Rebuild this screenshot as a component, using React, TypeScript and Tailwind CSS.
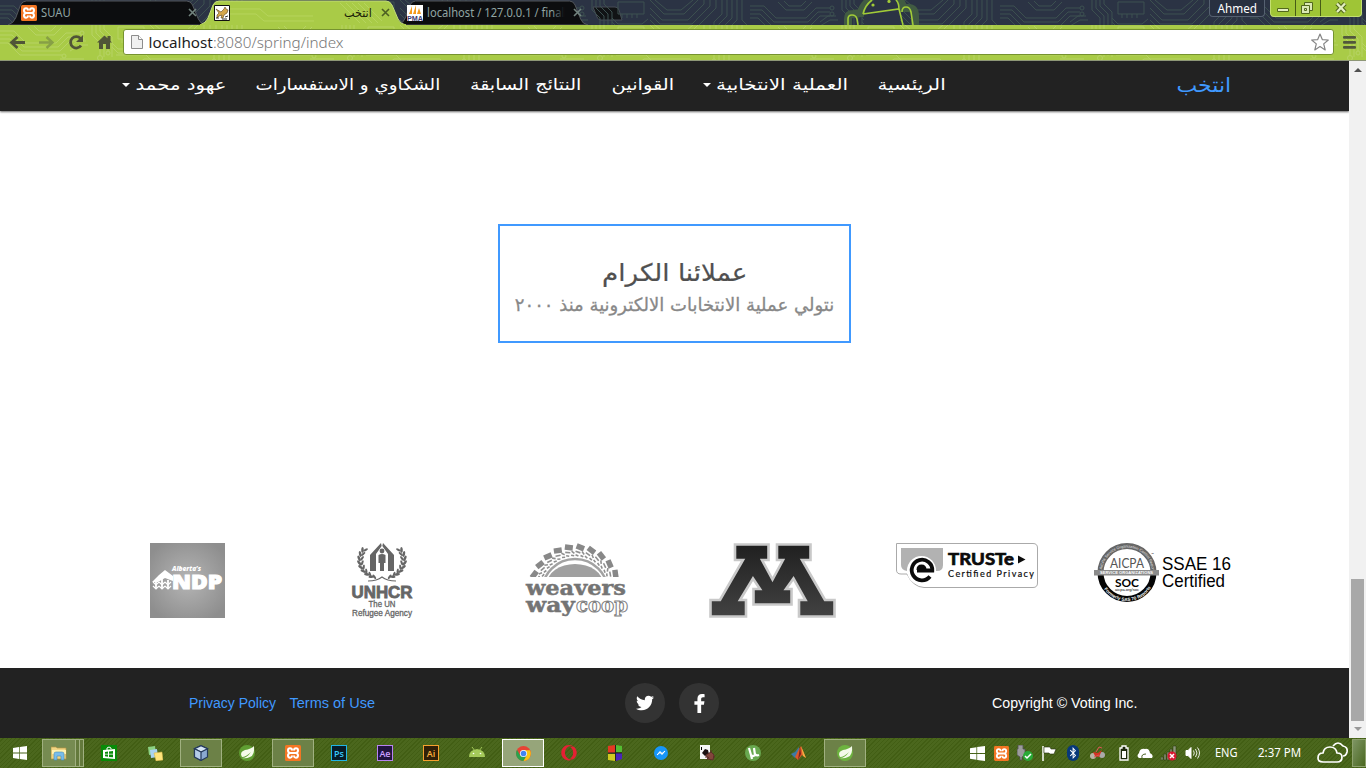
import React, { useLayoutEffect, useRef, useState } from "react";
import { FaTwitter, FaFacebookF, FaOpera, FaBluetoothB } from "react-icons/fa";

const ARABIC = "font-['DejaVu_Sans',sans-serif]";

/* Stretches a single line of text horizontally to the width of its box. */
function Fit({ className, children }: { className: string; children: React.ReactNode }) {
  const box = useRef<HTMLSpanElement>(null);
  const inner = useRef<HTMLSpanElement>(null);
  const [scale, setScale] = useState(1);
  useLayoutEffect(() => {
    if (box.current && inner.current) setScale(box.current.clientWidth / inner.current.offsetWidth);
  }, []);
  return (
    <span ref={box} className={`flex shrink-0 justify-center whitespace-nowrap ${className}`}>
      <span ref={inner} className="shrink-0" style={{ transform: `scaleX(${scale})` }}>
        {children}
      </span>
    </span>
  );
}

function Circuit({ id, stroke, className }: { id: string; stroke: string; className: string }) {
  return (
    <svg className={className} width="100%" height="100%" fill="none" stroke={stroke}>
      <defs>
        <pattern id={id} width="250" height="62" patternUnits="userSpaceOnUse">
          <path d="M0 6h14l12 12h30l10-10h14M0 10h12l12 12h34l10-10h12M0 14h10l12 12h38l10-10h10M0 18h8l12 12h42M92 0v10l8 8v12M96 0v8l8 8v16M100 0v6l8 8v12M104 0v4l8 8v20M118 2h26v12h-26zM122 14v4M127 14v4M132 14v4M137 14v4M150 0l14 14h20l14-14M155 0l12 10h14l12-10M150 8l12 12h26l16-16v-4M150 14l10 10h32l18-18v-6M150 20l8 8h38l20-20v-8M222 0v14l-8 8v12M227 0v16l-8 8v12M232 0v18l-8 8v12M237 0v20l-8 8v12M242 0v20l8 8M0 44h30l8-8h50l6 6h40l10-8h46l8 8h52M0 48h32l8-8h46l6 6h44l10-8h42l8 8h54M0 52h34l8-8h42l6 6h48l10-8h38l8 8h56M60 34h24M116 30h30l6 6" />
          <path d="M20 62v-6M40 62V54h20v8M82 62l8-8h20M152 56h24v6M192 62v-6h20v6" />
          <path d="M28 2l8 8h18l8-8M34 1l5 5h12l5-5M70 22l8-6h8M70 26l10-6h8M112 18l6 6h24l6-5M112 22l6 6h18" />
          <circle cx="82" cy="8" r="2" /><circle cx="82" cy="14" r="2" /><circle cx="100" cy="33" r="2.5" />
          <circle cx="108" cy="28" r="2" /><circle cx="214" cy="36" r="2" /><circle cx="64" cy="31" r="2" />
          <circle cx="36" cy="54" r="7" /><circle cx="36" cy="54" r="4" /><circle cx="130" cy="54" r="5" />
        </pattern>
      </defs>
      <rect width="100%" height="100%" fill={`url(#${id})`} stroke="none" />
    </svg>
  );
}

function XamppIcon({ className }: { className: string }) {
  return (
    <svg className={className} viewBox="0 0 16 16">
      <rect width="16" height="16" rx="1.5" fill="#f37623" />
      <g fill="none" stroke="#fff" strokeWidth="2">
        <path d="M7 5.5Q7 3.3 5 3.3T3 5.5Q3 7.6 5 8Q3 8.4 3 10.5T5 12.7T7 10.5M9 5.5Q9 3.3 11 3.3T13 5.5Q13 7.6 11 8Q13 8.4 13 10.5T11 12.7T9 10.5M5 8h6" />
      </g>
    </svg>
  );
}

function WindowsIcon({ className }: { className: string }) {
  return (
    <svg className={className} viewBox="0 0 14 14" fill="#fff">
      <path d="M0 2l6-.9v5.5H0zM6.7 1L14 0v6.6H6.7zM0 7.4h6v5.5L0 12zM6.7 7.4H14V14l-7.3-1z" />
    </svg>
  );
}

function Tab({ active, className, children }: { active?: boolean; className: string; children: React.ReactNode }) {
  return (
    <div className={`relative h-[25px] shrink-0 ${className}`}>
      <svg className="absolute inset-0 h-full w-full" viewBox="0 0 206 25" preserveAspectRatio="none">
        <path d="M0 25Q6 23 8 18L13 5Q15 1 19 1H186Q190 1 192 5L198 19Q200 24 206 25Z" fill={active ? "#a9cb47" : "#0c0d0f"} stroke={active ? "#c2dc79" : "#55595f"} />
        {active && <rect x="0" y="24" width="206" height="1" fill="#a9cb47" />}
        {active && <path d="M20 9h40l8 7h45M20 14h36l8 7h50M140 3l20 20M146 3l20 20M152 3l20 20M158 3l20 20M164 3l18 18" fill="none" stroke="#b6d45d" />}
      </svg>
      <div className="relative flex h-[25px] items-center">{children}</div>
    </div>
  );
}

function CloseX({ color }: { color: string }) {
  return (
    <svg className="h-[9px] w-[9px] shrink-0" viewBox="0 0 9 9" stroke={color} strokeWidth="1.6">
      <path d="M1 1l7 7M8 1l-7 7" />
    </svg>
  );
}

function TabStrip() {
  return (
    <div className="relative flex h-[25px] shrink-0 overflow-hidden bg-[#2b3344]">
      <Circuit id="strip" stroke="#3c504f" className="absolute inset-0" />
      <div className="flex pl-2">
        <Tab className="w-[198px]">
          <XamppIcon className="ml-[13px] h-4 w-4" />
          <Fit className="ml-1 w-[30px] font-['Noto_Sans',sans-serif] text-[12px] text-[#91a5a3]">SUAU</Fit>
          <span className="ml-[117px]"><CloseX color="#73847f" /></span>
        </Tab>
        <Tab active className="z-10 -ml-[6px] w-[206px]">
          <svg className="ml-[14px] h-4 w-4" viewBox="0 0 16 16">
            <path d="M.5.5h15v15H.5z" fill="#fff" stroke="#111" />
            <path d="M2 4l5 3 3-3 1-2 1 2 2 1-1 3-3 2-1 3H7l1-3-3 1-2 2v-3l2-2z" fill="#d4a64c" stroke="#59401a" strokeWidth=".6" />
            <path d="M2 13h3M11 12l3-1M8 14h5" stroke="#333" />
          </svg>
          <Fit className={`ml-[114px] w-[28px] text-[12px] text-[#1b2008] ${ARABIC}`}>انتخب</Fit>
          <span className="ml-[9px]"><CloseX color="#4c5f22" /></span>
        </Tab>
        <Tab className="-ml-[8px] w-[190px]">
          <svg className="ml-[9px] h-4 w-4 shrink-0" viewBox="0 0 16 16">
            <path d="M0 0h16v16H0z" fill="#fff" />
            <path d="M2 9L5 1v8zM6 9l3-9v9zM10 9l2-6 2 6z" fill="#f59a1b" />
            <text x="0" y="15.500" fontSize="7" fontWeight="700" fontFamily="Liberation Sans" fill="#3b3a72" textLength="16" lengthAdjust="spacingAndGlyphs">PMA</text>
          </svg>
          <div className="relative ml-1 shrink-0">
            <Fit className="w-[137px] font-['Noto_Sans',sans-serif] text-[12px] text-[#91a5a3]">localhost / 127.0.0.1 / final</Fit>
            <div className="absolute inset-y-0 right-0 w-3 bg-linear-to-r from-transparent to-[#0c0d0f]" />
          </div>
          <span className="ml-[9px]"><CloseX color="#73847f" /></span>
        </Tab>
        <svg className="mt-[6px] ml-[3px] h-[15px] w-[32px]" viewBox="0 0 32 15">
          <path d="M2 1h22q3 0 4 3l3 10H10q-3 0-4-3z" fill="#111315" stroke="#484d57" />
        </svg>
      </div>
      <svg className="absolute top-0 left-[838px] h-[25px] w-[84px]" viewBox="0 0 84 25" fill="none">
        <path d="M10 25V19q0-5 5-5l8-1Q25 5 32 0h30q3 5 3 8h5q7 0 7 8v9" stroke="#415b42" strokeWidth="8" />
        <path d="M26 15Q28 5 36 0H57Q61 3 62 9V25H26z" fill="#2b3344" />
        <path d="M25 14l36-5 4 16M25 14q2-9 9-14M61 9Q61 3 58 0M10 25v-6q0-4 4-4t5 4l1 6M64 12q0-5 4-5t5 5l2 13" stroke="#a1cb38" strokeWidth="1.6" />
        <circle cx="35" cy="5" r="1.6" fill="#a1cb38" /><circle cx="51" cy="1.500" r="1.6" fill="#a1cb38" />
      </svg>
      <div className="relative ml-auto mr-[4px] flex">
        <div className="mr-[5px] flex h-[17px] w-[56px] justify-center rounded-b border border-t-0 border-[#566171] bg-[#283040]">
          <Fit className="w-[39px] font-['Noto_Sans',sans-serif] text-[12px] leading-[18px] text-white">Ahmed</Fit>
        </div>
        <div className="flex h-[17px] overflow-hidden rounded-b border border-t-0 border-[#c3df70] bg-[#9fc536]">
          <svg className="h-4 w-[90px]" viewBox="0 0 90 16" fill="none">
            <path d="M24.5 0v16M49.5 0v16" stroke="#475c16" />
            <path d="M6.500 8.500h11v3h-11z" fill="#e3efc0" stroke="#52681c" />
            <path d="M33.500 2.500h8v8h-8z" fill="#dbe9b4" stroke="#52681c" />
            <path d="M30.500 5.500h8v8h-8z" fill="#dbe9b4" stroke="#52681c" /><path d="M33.500 8.500h2v2h-2z" stroke="#52681c" />
            <path d="M66 3.500l8 8.500M74 3.500l-8 8.500" stroke="#52681c" strokeWidth="4.500" /><path d="M66 3.500l8 8.500M74 3.500l-8 8.500" stroke="#e3efc0" strokeWidth="2.400" />
          </svg>
        </div>
      </div>
    </div>
  );
}

function Toolbar() {
  return (
    <div className="relative flex h-9 shrink-0 items-center border-b border-[#8e9777] bg-[#a9cb47]">
      <Circuit id="bar" stroke="#b7d364" className="absolute inset-0" />
      <svg className="relative h-9 w-[123px] shrink-0" viewBox="0 0 123 36" fill="none" stroke="#505537" strokeWidth="2.8">
        <path d="M25 17.500H12M17.500 12l-6 5.500 6 5.500" />
        <path d="M39 17.500h13M46.500 12l6 5.500-6 5.500" stroke="#87a045" strokeWidth="2.400" />
        <path d="M80.500 13.500a5.700 5.700 0 1 0 .500 7" /><path d="M83 10v7h-7z" fill="#505537" stroke="none" />
        <path d="M97 17.500l7.500-7 3 2.800V11h3v5l1.500 1.500h-2V24h-4v-5h-3v5h-4v-6.500z" fill="#505537" stroke="none" />
      </svg>
      <div className="relative mb-px flex h-[26px] w-[1211px] items-center rounded-[3px] border border-[#76932f] bg-white pl-[7px] pr-[3px]">
        <svg className="h-4 w-3 shrink-0" viewBox="0 0 12 16">
          <path d="M.5 1.500h7l4 4v9H.5z" fill="#f0f0f0" stroke="#8d8d8d" /><path d="M7.500 1.500v4h4" fill="#fff" stroke="#8d8d8d" />
        </svg>
        <Fit className="ml-[6px] w-[195px] font-['Noto_Sans',sans-serif] text-[15px] font-light leading-6 text-[#777]">
          <span className="font-normal text-[#1c1c1c]">localhost</span>:8080/spring/index
        </Fit>
        <svg className="ml-auto h-5 w-5" viewBox="0 0 20 20">
          <path d="M10 2l2.300 5.600 6 .400-4.600 3.900 1.500 6L10 14.600 4.800 17.900l1.500-6L1.700 8l6-.400z" fill="#fff" stroke="#858585" strokeWidth="1.200" strokeLinejoin="round" />
        </svg>
      </div>
      <svg className="relative ml-2 h-[15px] w-[15px]" viewBox="0 0 15 15" fill="#51573c">
        <rect x="1" y="1" width="13" height="2.800" rx="1" /><rect x="1" y="6" width="13" height="2.800" rx="1" /><rect x="1" y="11" width="13" height="2.800" rx="1" />
      </svg>
    </div>
  );
}

function NavItem({ width, label, caret }: { width: string; label: string; caret?: boolean }) {
  return (
    <li className="flex items-center gap-[5px]">
      <Fit className={width}>{label}</Fit>
      {caret && <span className="border-x-4 border-t-4 border-x-transparent border-t-white" />}
    </li>
  );
}

function Navbar() {
  return (
    <nav dir="rtl" className={`flex h-[50px] shrink-0 items-center bg-[#222] pr-[118px] text-white shadow-[0_1px_2px_rgba(0,0,0,.6)] ${ARABIC}`}>
      <Fit className="w-[55px] pb-[3px] text-[20px] text-[#4099ff]">انتخب</Fit>
      <ul className="mr-[230px] flex gap-[29.6px] pb-[2px] text-[16px]">
        <NavItem width="w-[68px]" label="الريئسية" />
        <NavItem width="w-[132px]" label="العملية الانتخابية" caret />
        <NavItem width="w-[63px]" label="القوانين" />
        <NavItem width="w-[111px]" label="النتائج السابقة" />
        <NavItem width="w-[185px]" label="الشكاوي و الاستفسارات" />
        <NavItem width="w-[91px]" label="عهود محمد" caret />
      </ul>
    </nav>
  );
}

function NdpLogo() {
  return (
    <svg className="h-[75px] w-[75px]" viewBox="0 0 75 75">
      <defs><radialGradient id="ndp" r=".6"><stop stopColor="#b5b5b5" /><stop offset="1" stopColor="#8e8e8e" /></radialGradient></defs>
      <rect width="75" height="75" fill="url(#ndp)" />
      <g fill="#fff" fontFamily="Open Sans" fontWeight="800">
        <text x="22" y="28" fontSize="7.500" fontStyle="italic" textLength="29" lengthAdjust="spacingAndGlyphs">Alberta’s</text>
        <text x="22" y="46" fontSize="18.500" stroke="#fff" strokeWidth="1" textLength="50" lengthAdjust="spacingAndGlyphs">NDP</text>
        <path d="M2 39l7-7 6-5 8 6v5l-8-3-7 4z" />
      </g>
      <path d="M6 37v9M12 36v10M18 37v9" stroke="#fff" strokeWidth="1.800" />
      <path d="M3 39l3 3 3-3M9 39l3 3 3-3M15 39l3 3 3-3M3 43l3 3 3-3M9 43l3 3 3-3M15 43l3 3 3-3" fill="none" stroke="#fff" strokeWidth="1.200" />
    </svg>
  );
}

function UnhcrLogo() {
  const leaves = [0, 1, 2, 3, 4, 5, 6, 7];
  return (
    <svg className="h-[75px] w-[62px]" viewBox="0 0 62 75" fill="#666">
      {leaves.map((i) => {
        const a = ((115 + i * 14) * Math.PI) / 180;
        const x = 31 + Math.cos(a) * 21.5;
        const y = 17 + Math.sin(a) * 18.5;
        const turn = 115 + i * 14;
        return (
          <g key={i}>
            <ellipse cx={x - 1.5} cy={y} rx="1.300" ry="3" transform={`rotate(${turn - 30} ${x - 1.5} ${y})`} />
            <ellipse cx={x + 1.5} cy={y} rx="1.100" ry="2.700" transform={`rotate(${turn + 30} ${x + 1.5} ${y})`} />
            <ellipse cx={63.5 - x} cy={y} rx="1.300" ry="3" transform={`rotate(${30 - turn} ${63.5 - x} ${y})`} />
            <ellipse cx={60.5 - x} cy={y} rx="1.100" ry="2.700" transform={`rotate(${-30 - turn} ${60.5 - x} ${y})`} />
          </g>
        );
      })}
      <path d="M19 28V12L30 0l.7 3-5.700 8v17zM43 28V12L32 0l-.7 3 5.700 8v17z" />
      <circle cx="31" cy="8" r="2.400" />
      <path d="M27.500 12q3.500-2 7 0v8h-1.500v8h-4v-8h-1.500z" />
      <path d="M17 38q9 0 14-4 5 4 14 4" fill="none" stroke="#666" strokeWidth="1.200" />
      <g fontFamily="Liberation Sans">
        <text x=".5" y="55" fontSize="16.500" fontWeight="700" stroke="#666" strokeWidth=".8" textLength="61" lengthAdjust="spacingAndGlyphs">UNHCR</text>
        <g stroke="#666" strokeWidth=".3" fontSize="8.500">
          <text x="17.500" y="64" textLength="27" lengthAdjust="spacingAndGlyphs">The UN</text>
          <text x="1" y="72.500" textLength="60" lengthAdjust="spacingAndGlyphs">Refugee Agency</text>
        </g>
      </g>
    </svg>
  );
}

function WeaversLogo() {
  const rays = [0, 1, 2, 3, 4, 5, 6, 7, 8, 9, 10, 11];
  return (
    <svg className="h-[75px] w-[104px]" viewBox="0 0 104 75">
      <defs><clipPath id="sun"><rect width="104" height="34" /></clipPath></defs>
      <g clipPath="url(#sun)">
        {rays.map((i) => (
          <g key={i} transform={`rotate(${-82 + i * 15} 50 48)`}>
            <rect x="45.500" y="1.500" width="8" height="5.500" fill="#888" transform="rotate(14 50 3)" />
            <path d="M45 8.500l5 1M51.500 8l2.500 2.500M45.500 12l3 .800M50.500 12l3 1" stroke="#8f8f8f" strokeWidth="1.600" />
          </g>
        ))}
        <circle cx="50" cy="49" r="33" fill="none" stroke="#a2a2a2" strokeWidth="2.500" />
        <ellipse cx="50" cy="41" rx="28" ry="20" fill="#a0a0a0" />
      </g>
      <g fontFamily="DejaVu Serif" fontWeight="700">
        <g fill="#747474" stroke="#747474" strokeWidth=".4">
          <text transform="translate(1 52) scale(1 1.150)" fontSize="17.500" textLength="100" lengthAdjust="spacingAndGlyphs">weavers</text>
          <text transform="translate(1 69) scale(1 1.150)" fontSize="17" textLength="49" lengthAdjust="spacingAndGlyphs">way</text>
        </g>
        <text transform="translate(51 69) scale(1 1.150)" fontSize="17" fill="#fff" stroke="#808080" strokeWidth=".9" textLength="52" lengthAdjust="spacingAndGlyphs">coop</text>
      </g>
    </svg>
  );
}

function MLogo() {
  return (
    <svg className="h-[75px] w-[127px]" viewBox="0 0 127 75">
      <defs><linearGradient id="mg" x2="0" y2="1"><stop stopColor="#202020" /><stop offset="1" stopColor="#424242" /></linearGradient></defs>
      <path d="M26 1.500h33.500V17H53L63.500 36.500 74 17H68V1.500h33.500V17H93l23 40h9.500v16.500H90V57h6.500L84.500 35.500 77 46h5.500V61.500H44.500V46H51l-7-10.500L31 57h6v16.500H1.500V57H11l23-40h-8z" fill="url(#mg)" stroke="#c9c9c9" strokeWidth="2.600" />
    </svg>
  );
}

function TrusteLogo() {
  return (
    <svg className="h-[45px] w-[142px]" viewBox="0 0 142 45">
      <path d="M.5.500H137q4.500 0 4.500 4.500V40q0 4.500-4.500 4.500H28Q17 44 11 31H5Q.5 31 .5 27z" fill="#fff" stroke="#aaa" />
      <path d="M5 5h42v17q0 6-6 6H11Q5 27 5 22z" fill="#b2b2b2" />
      <circle cx="25.500" cy="27.500" r="14.500" fill="#fff" />
      <path d="M34 33.500A10.300 10.300 0 1 1 36.300 27.500H21" fill="none" stroke="#0b0b0b" strokeWidth="3.800" />
      <path d="M20.500 27q0-5.500 5-5.500t5 5.500z" fill="#0b0b0b" />
      <g fill="#0b0b0b">
        <text x="52" y="22.300" fontSize="17" fontWeight="700" fontFamily="Lato" stroke="#0b0b0b" strokeWidth=".7" textLength="66" lengthAdjust="spacingAndGlyphs">TRUSTe</text>
        <path d="M122 12.500l7.500 4-7.500 4z" />
        <text x="52" y="33.500" fontSize="9" fontFamily="Lato" stroke="#0b0b0b" strokeWidth=".2" textLength="86" lengthAdjust="spacing">Certified Privacy</text>
      </g>
    </svg>
  );
}

function SsaeLogo() {
  return (
    <svg className="-mr-[2px] h-[60px] w-[138px]" viewBox="0 0 138 60" fontFamily="Liberation Sans">
      <circle cx="33" cy="30" r="25.500" fill="#fff" />
      <path d="M6.500 29.500a26.500 26.500 0 0 1 53 0" fill="none" stroke="#666" strokeWidth="6" />
      <path d="M6.500 29.500a26.500 26.500 0 0 0 53 0" fill="none" stroke="#050505" strokeWidth="6" />
      <path id="arcTop" d="M8 29.500a25 25 0 0 1 50 0" fill="none" />
      <path id="arcBottom" d="M5 30a28 28 0 0 0 56 0" fill="none" />
      <text fontSize="3.800" fill="#e5e5e5"><textPath href="#arcTop" startOffset="3">AICPA Service Organization Control Reports</textPath></text>
      <text fontSize="4.600" fontWeight="700" fill="#fff"><textPath href="#arcBottom" startOffset="17">Formerly SAS 70 Reports</textPath></text>
      <rect x="0" y="27" width="65" height="5.500" fill="#8b8b8b" />
      <text x="6" y="31.200" fontSize="4" fontWeight="700" fill="#fff" textLength="53">SERVICE ORGANIZATIONS</text>
      <text x="16" y="25" fontSize="12.500" fill="#555" fontFamily="Lato" textLength="34" lengthAdjust="spacingAndGlyphs">AICPA</text>
      <text x="21" y="43.500" fontSize="11.500" fontFamily="Lato" fontWeight="700" textLength="24" lengthAdjust="spacingAndGlyphs">SOC</text>
      <text x="21" y="48" fontSize="4" textLength="24">aicpa.org/soc</text>
      <text x="57" y="12" fontSize="3">™</text>
      <text x="68" y="27" fontSize="17.500" textLength="69" lengthAdjust="spacingAndGlyphs">SSAE 16</text>
      <text x="68" y="44" fontSize="17.500" textLength="63" lengthAdjust="spacingAndGlyphs">Certified</text>
    </svg>
  );
}

function Page() {
  return (
    <div className="flex w-[1349px] flex-col bg-white">
      <Navbar />
      <main className="flex h-[557px] flex-col items-center pt-[113px]">
        <section dir="rtl" className={`flex h-[119px] w-[353px] flex-col items-center border-2 border-[#4099ff] pt-[30px] ${ARABIC}`}>
          <h2><Fit className="h-[34px] w-[145px] text-[24px] leading-[34px] text-[#505050] [-webkit-text-stroke:0.2px_#505050]">عملائنا الكرام</Fit></h2>
          <p><Fit className="h-[30px] w-[319px] text-[18px] leading-[30px] text-[#888] [-webkit-text-stroke:0.3px_#888]">نتولي عملية الانتخابات الالكترونية منذ ٢٠٠٠</Fit></p>
        </section>
        <div className="mt-[200px] grid w-[1170px] grid-cols-6 items-start justify-items-center">
          <NdpLogo /><UnhcrLogo /><WeaversLogo /><MLogo /><TrusteLogo /><SsaeLogo />
        </div>
      </main>
      <footer className="flex h-[70px] justify-center bg-[#222] font-['Liberation_Sans',sans-serif] text-[14px]">
        <div className="grid w-[1170px] grid-cols-3 items-center justify-items-center">
          <div className="mr-[5px] flex gap-[14px] text-[#4099ff]"><Fit className="w-[87px]">Privacy Policy</Fit><Fit className="w-[85px]">Terms of Use</Fit></div>
          <div className="mr-[5px] flex gap-[14px] text-white">
            <span className="grid h-10 w-10 place-items-center rounded-full bg-[#333]"><FaTwitter size={18} /></span>
            <span className="grid h-10 w-10 place-items-center rounded-full bg-[#333]"><FaFacebookF size={19} /></span>
          </div>
          <Fit className="w-[145px] text-white">Copyright © Voting Inc.</Fit>
        </div>
      </footer>
    </div>
  );
}

function Scrollbar() {
  return (
    <div className="flex w-[17px] flex-col items-center justify-between bg-[#f1f1f1] py-[7px]">
      <span className="border-x-4 border-b-4 border-x-transparent border-b-[#505050]" />
      <div className="mt-auto mb-[6px] h-[142px] w-[13px] bg-[#a8a8a8]" />
      <span className="border-x-4 border-t-4 border-x-transparent border-t-[#999]" />
    </div>
  );
}

function Adobe({ label, className }: { label: string; className: string }) {
  return <span className={`grid h-4 w-4 place-items-center border font-['Open_Sans',sans-serif] text-[9px] leading-none font-semibold ${className}`}>{label}</span>;
}

function SpringIcon({ boxed }: { boxed?: boolean }) {
  return (
    <svg className="h-4 w-4" viewBox="0 0 16 16">
      <circle cx="8" cy="8" r="8" fill={boxed ? "#6db33f" : "#5f9e32"} />
      <path d="M15 1q1 9-4 11-4 2-8 1 5 0 9-6-5 5-9 5-3-5 3-7 6-1 9-4z" fill="#f4fbe9" />
    </svg>
  );
}

function Slot({ mode, children }: { mode?: "open" | "focused"; children: React.ReactNode }) {
  const tone = mode === "focused" ? "border-white bg-[#96a57a]" : mode === "open" ? "border-[#a0b080] bg-[#6c8147]" : "border-transparent";
  return <div className="flex w-[46px] shrink-0 justify-center"><div className={`grid h-7 w-[42px] place-items-center border ${tone}`}>{children}</div></div>;
}

function Taskbar() {
  return (
    <div className="flex h-[30px] shrink-0 items-center bg-[repeating-linear-gradient(135deg,#4b671d_0px,#4b671d_2px,#425e14_2px,#425e14_3px)] text-white">
      <div className="flex w-[42px] pl-[13px]"><WindowsIcon className="h-[14px] w-[14px]" /></div>
      <div className="mr-[2px] flex h-7 w-[42px]">
        <div className="grid w-[34px] place-items-center border border-[#a0b080] bg-[#768b51]">
          <svg className="h-4 w-4" viewBox="0 0 16 16">
            <path d="M0 2h5l1 1h9v11H0z" fill="#f0d584" stroke="#b69543" strokeWidth=".7" />
            <path d="M1 5h14v4H1z" fill="#fff2b0" /><path d="M3 15V9q0-2 2-2h6q2 0 2 2v6h-3v-4H6v4z" fill="#79bdeb" stroke="#438db8" strokeWidth=".6" />
          </svg>
        </div>
        <div className="w-1 border border-l-0 border-[#a0b080] bg-[#647a3c]" /><div className="w-1 border border-l-0 border-[#a0b080] bg-[#647a3c]" />
      </div>
      <Slot><svg className="h-4 w-4" viewBox="0 0 16 16"><path d="M0 0h16v16H0z" fill="#088b08" /><path d="M2 5l12-1v10L2 13z" fill="#fff" /><path d="M6 5V3q2-2 4 0v1" fill="none" stroke="#fff" /><path d="M4 7l3-.4v2.200H4zM8 6.500l4-.5v2.800H8zM4 9.500h3v2.200L4 11.300zM8 9.500h4v2.800l-4-.4z" fill="#088b08" /></svg></Slot>
      <Slot><svg className="h-4 w-4" viewBox="0 0 16 16"><path d="M1 2l7-1 1 8-7 1z" fill="#8bd283" /><path d="M3 5l7-1 1 8-7 1z" fill="#a9d2f0" /><path d="M7 8l8-1 1 8-7 1z" fill="#ffe57c" stroke="#d1ae45" strokeWidth=".5" /></svg></Slot>
      <Slot mode="open"><svg className="h-4 w-4" viewBox="0 0 16 16" stroke="#24395c" strokeWidth="1.200"><path d="M8 .700l6.500 3V12L8 15.500 1.500 12V3.700z" fill="#8aa9d2" /><path d="M1.500 3.700L8 7l6.500-3.300L8 .700z" fill="#d5e5f5" /><path d="M8 7v8.500L1.500 12V3.700z" fill="#b4cce9" /></svg></Slot>
      <Slot><SpringIcon /></Slot>
      <Slot mode="open"><XamppIcon className="h-4 w-4" /></Slot>
      <Slot><Adobe label="Ps" className="border-[#20b5e5] bg-[#071b28] text-[#38c8fa]" /></Slot>
      <Slot><Adobe label="Ae" className="border-[#b783f3] bg-[#211340] text-[#cba0ff]" /></Slot>
      <Slot><Adobe label="Ai" className="border-[#f6a12d] bg-[#302008] text-[#ffb13d]" /></Slot>
      <Slot><svg className="h-4 w-4" viewBox="0 0 16 16" fill="#a4c95a"><path d="M0 12q0-7 8-8 8 1 8 8z" /><path d="M3 2l3 4M13 2l-3 4" stroke="#a4c95a" /><circle cx="4.500" cy="8.500" r=".8" fill="#fff" /><circle cx="11.500" cy="8.500" r=".8" fill="#fff" /></svg></Slot>
      <Slot mode="focused"><svg className="h-[15px] w-[15px]" viewBox="0 0 16 16"><circle cx="8" cy="8" r="8" fill="#e64435" /><path d="M1.100 4A8 8 0 0 0 8 16l3.500-6H4.500z" fill="#2ba24c" /><path d="M8 16A8 8 0 0 0 15 4.500H8l3.500 5.500z" fill="#fac515" /><circle cx="8" cy="8" r="3.800" fill="#fff" /><circle cx="8" cy="8" r="3" fill="#4285f4" /></svg></Slot>
      <Slot><FaOpera size={16} color="#e52033" /></Slot>
      <Slot><svg className="h-4 w-4" viewBox="0 0 16 16"><path d="M1 1l7-1v8H1z" fill="#e33922" /><path d="M9 0l6 1v6H9z" fill="#54bd32" /><path d="M1 9h7v7l-7-1z" fill="#d0ca20" /><path d="M9 8h6v6l-6 2z" fill="#4a24bb" /><path d="M8.500 0v16M1 8h14" stroke="#222" /></svg></Slot>
      <Slot><svg className="h-[14px] w-[14px]" viewBox="0 0 14 14"><circle cx="7" cy="7" r="7" fill="#1696fa" /><path d="M3 9l3-3.500 2 2L11 5 8 8.500l-2-2z" fill="#fff" stroke="#fff" /></svg></Slot>
      <Slot><svg className="h-4 w-4" viewBox="0 0 16 16"><path d="M1 0h10v14H1z" fill="#f7f7f7" /><path d="M2 2h1v3H2z" /><path d="M6 4l3 1 1 4-4 2-3-3z" fill="#1b1111" /><path d="M7 10l5-3 3 3-1 5-5-1zM7 15l3-3M12 8V5M14 12h2M6 12h3" fill="#83463c" stroke="#5e2e2a" /></svg></Slot>
      <Slot><svg className="h-4 w-4" viewBox="0 0 16 16"><circle cx="8" cy="8" r="8" fill="#68a850" /><path d="M4 3l2 7q2 2 4 0L9 3M10 9q1 2 4 1M6 10l1 4" fill="none" stroke="#fff" strokeWidth="2.200" /></svg></Slot>
      <Slot><svg className="h-4 w-4" viewBox="0 0 16 16"><path d="M0 9l4-2 4-5v7l-4 4z" fill="#3d79a4" /><path d="M4 12l4-8 2-3 5 12-4-3-4 5z" fill="#dc572a" /><path d="M10 1l5 12-3-2z" fill="#f2b142" /><path d="M9 2l1 7-3 6z" fill="#7a241d" /></svg></Slot>
      <Slot mode="open"><SpringIcon boxed /></Slot>

      <div className="ml-auto flex items-center">
        <div className="grid w-[240px] grid-cols-10 items-center justify-items-center">
          <WindowsIcon className="h-[15px] w-[15px]" />
          <XamppIcon className="h-[15px] w-[15px]" />
          <svg className="h-4 w-4" viewBox="0 0 16 16"><path d="M1 0h5v4h2v6l-3 2v3H3v-3L0 10V4h1z" fill="#9c9c9c" stroke="#515151" strokeWidth=".8" /><circle cx="11" cy="11" r="5" fill="#2aa937" /><path d="M8 11l2 2 4-4" stroke="#fff" strokeWidth="1.500" fill="none" /></svg>
          <svg className="h-4 w-4" viewBox="0 0 16 16"><path d="M2 1v15" stroke="#fff" strokeWidth="1.500" /><path d="M3 2h6l1 2h5l-2 5H9L8 8H3z" fill="#fff" stroke="#253111" strokeWidth=".6" /></svg>
          <span className="grid h-4 w-3 place-items-center rounded-full bg-[#07387a]"><FaBluetoothB size={12} color="#fff" /></span>
          <svg className="h-4 w-4" viewBox="0 0 16 16"><circle cx="4" cy="11" r="3" fill="#b9b2a5" /><circle cx="13" cy="10" r="3" fill="#aaa" /><path d="M4 7l5 1 4-3-3 7-4-1z" fill="#d63225" /><path d="M7 7l3-5 3 1M5 12l5-2" stroke="#d55" fill="none" /></svg>
          <svg className="ml-[6px] h-4 w-[10px]" viewBox="0 0 10 16"><path d="M3 1h4v2h2v12H1V3h2z" fill="#1d290d" stroke="#fff" strokeWidth="1.300" /><path d="M3 6h4v7H3z" fill="#fff" /></svg>
          <svg className="h-4 w-4" viewBox="0 0 16 16"><path d="M2 13q-3-2 0-5 1-5 6-4 4-1 5 4 4 2 2 5z" fill="#fff" /><path d="M5 13q-1-4 4-4" stroke="#4a6122" fill="none" /></svg>
          <svg className="h-4 w-4" viewBox="0 0 16 16"><path d="M0 12h2v3H0zM3 9h2v6H3zM6 7h2v8H6zM9 4h2v11H9zM12 1h3v14h-3z" fill="#8c967a" stroke="#24310f" strokeWidth=".5" /><circle cx="11" cy="11" r="4.500" fill="#d81930" /><path d="M9 9l4 4M13 9l-4 4" stroke="#fff" strokeWidth="1.500" /></svg>
          <svg className="h-4 w-4" viewBox="0 0 16 16" fill="none" stroke="#fff"><path d="M1 5.500h2l3-3v11l-3-3H1z" fill="#fff" /><path d="M8.500 5.500q1.500 2.500 0 5M10.500 4q3 4 0 8M12.500 2.500q4 5.500 0 11" strokeWidth=".9" /></svg>
        </div>
        <Fit className="ml-[10px] w-[23px] font-['Noto_Sans',sans-serif] text-[12px]">ENG</Fit>
        <Fit className="ml-[20px] w-[43px] font-['Noto_Sans',sans-serif] text-[12px]">2:37 PM</Fit>
        <svg className="ml-[16px] h-[22px] w-[31px]" viewBox="0 0 31 22" fill="none" stroke="#fff" strokeWidth="1.700"><path d="M6 20q-5 0-5-4 0-5 5-5 1-6 7-6 6 0 7 6 5 0 5 4 0 5-5 5z" /><path d="M16 4q5-6 10 0 5 1 4 6-1 4-4 4" /></svg>
        <div className="ml-1 h-7 w-[14px] border border-[#8da16d] bg-linear-to-br from-[#7e9563] to-[#4b681f]" />
      </div>
    </div>
  );
}

export default function App() {
  return (
    <div className="flex h-[768px] w-[1366px] flex-col overflow-hidden bg-white">
      <TabStrip />
      <Toolbar />
      <div className="flex h-[677px] shrink-0"><Page /><Scrollbar /></div>
      <Taskbar />
    </div>
  );
}
